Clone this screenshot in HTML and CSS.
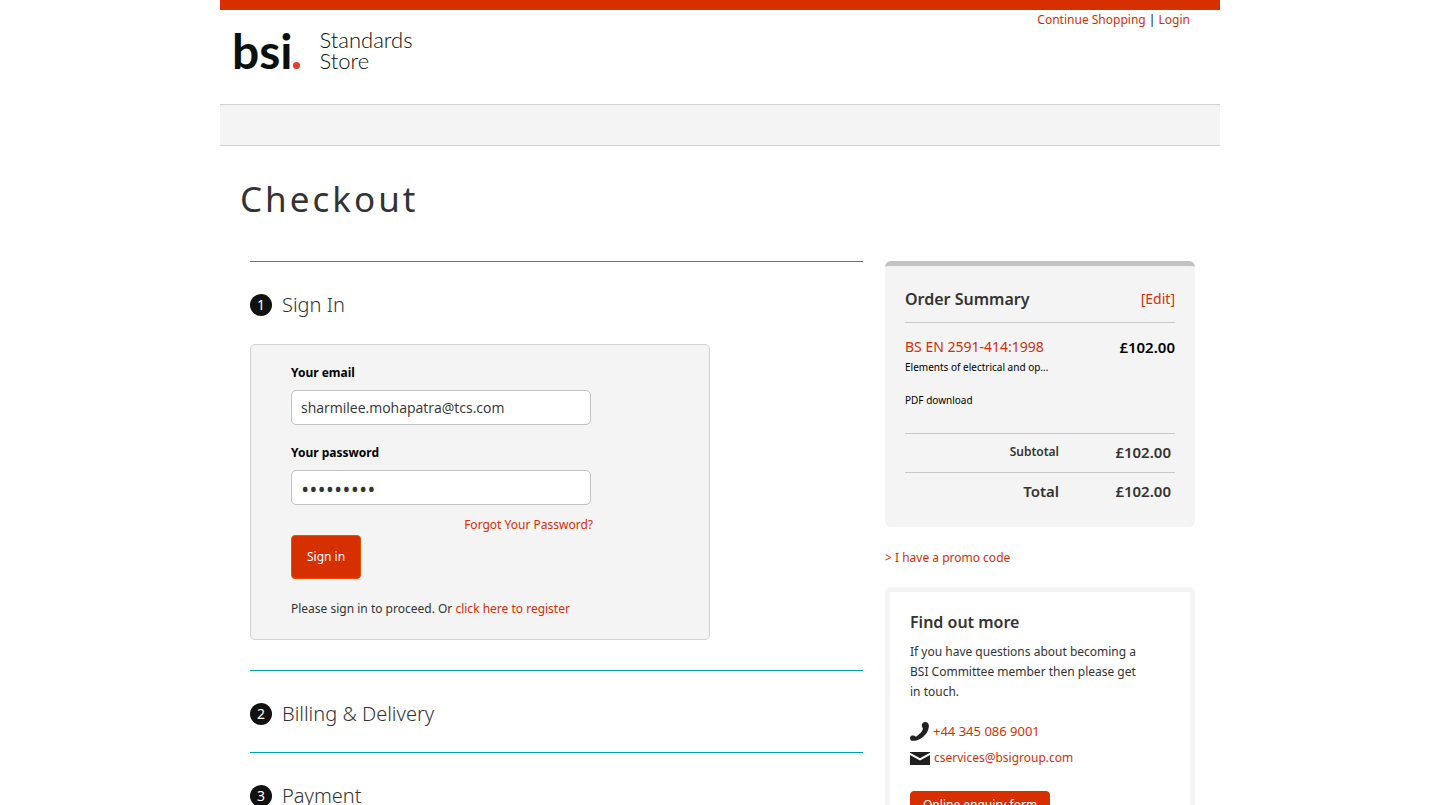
FILE: index.html
```html
<!DOCTYPE html>
<html lang="en">
<head>
<meta charset="utf-8">
<meta name="viewport" content="width=device-width, initial-scale=1">
<title>Checkout - BSI Standards Store</title>
<link rel="stylesheet" href="styles.css">
</head>
<body>
<div class="page">
  <header class="header">
    <a class="logo" href="#" aria-label="BSI Standards Store">
      <span class="logo-mark">bsi</span>
      <svg class="logo-dot" viewBox="0 0 7 7" aria-hidden="true"><circle cx="3.5" cy="3.5" r="3.5" fill="#e63b2b"/></svg>
      <span class="logo-name">Standards<br>Store</span>
    </a>
    <nav class="user-links"><a href="#">Continue Shopping</a> | <a href="#">Login</a></nav>
  </header>
  <div class="nav-bar"></div>
  <h1 class="title">Checkout</h1>
  <div class="columns">
    <main>
      <section class="step">
        <h2 class="step-title"><span class="step-number">1</span>Sign In</h2>
        <form class="sign-in">
          <label class="label" for="email">Your email</label>
          <input class="field" id="email" type="email" value="sharmilee.mohapatra@tcs.com">
          <label class="label" for="password">Your password</label>
          <input class="field field-password" id="password" type="password" value="password1">
          <a class="forgot" href="#">Forgot Your Password?</a>
          <button class="button submit" type="button">Sign in</button>
          <p class="register">Please sign in to proceed. Or <a href="#">click here to register</a></p>
        </form>
      </section>
      <section class="step">
        <h2 class="step-title"><span class="step-number">2</span>Billing &amp; Delivery</h2>
      </section>
      <section class="step">
        <h2 class="step-title"><span class="step-number">3</span>Payment</h2>
      </section>
    </main>
    <aside>
      <section class="summary">
        <div class="summary-head">
          <h3 class="side-title">Order Summary</h3>
          <a class="edit" href="#">[Edit]</a>
        </div>
        <div class="item">
          <div>
            <a class="item-name" href="#">BS EN 2591-414:1998</a>
            <p class="item-note">Elements of electrical and op...</p>
            <p class="item-note item-format">PDF download</p>
          </div>
          <span class="item-price">£102.00</span>
        </div>
        <table class="totals">
          <tr><th class="small" scope="row">Subtotal</th><td>£102.00</td></tr>
          <tr><th scope="row">Total</th><td>£102.00</td></tr>
        </table>
      </section>
      <a class="promo" href="#">&gt; I have a promo code</a>
      <section class="contact">
        <h3 class="side-title">Find out more</h3>
        <p class="contact-text">If you have questions about becoming a BSI Committee member then please get in touch.</p>
        <div class="contact-row">
          <svg class="phone" viewBox="0 0 20 20" aria-hidden="true"><path fill="#202020" d="M13.200 1.200C14.500-.2 17-.3 18.500.9c1.200 1 1.500 2.600 1.300 4.300C19.200 10.500 15.500 15 10.500 17.800 7.500 19.400 4.300 20.200 1.900 19.700.2 19.300-.4 17.200.3 15.700c.8-1.600 2.700-1.900 4.300-1.200l1.600.9c3.500-1.700 6.300-4.700 7.500-8.200l-.7-1.400c-.8-1.600-.9-3.300.2-4.600z"/></svg>
          <a class="phone-number" href="#">+44 345 086 9001</a>
        </div>
        <div class="contact-row">
          <svg class="mail" viewBox="0 0 20 13" aria-hidden="true"><path fill="#202020" d="M0 0h20v.8L10 6.200 0 .8zM0 3l10 5.400L20 3V13H0z"/></svg>
          <a href="#">cservices@bsigroup.com</a>
        </div>
        <button class="button enquiry" type="button">Online enquiry form</button>
      </section>
    </aside>
  </div>
</div>
</body>
</html>
```

FILE: styles.css
```css
* {
  box-sizing: border-box;
}

body {
  margin: 0;
  background: #fff;
  color: #333;
  font: 12px/20px "Noto Sans", "Open Sans", sans-serif;
}

h1, h2, h3, p {
  margin: 0;
}

a {
  color: #d62f00;
  text-decoration: none;
}

.page {
  max-width: 1000px;
  margin: 0 auto;
  border-top: 10px solid #d62f00;
}

.header {
  display: flex;
  justify-content: space-between;
  height: 94px;
  padding: 0 30px 0 12px;
}

.logo {
  display: flex;
  align-items: baseline;
  padding-top: 14px;
  color: #0a100d;
}

.logo-mark {
  font: 700 48px/54px Lato, sans-serif;
}

.logo-dot {
  width: 7px;
  height: 7px;
}

.logo-name {
  align-self: flex-start;
  padding: 5px 0 0 20px;
  font: 300 22px/21px Lato, sans-serif;
}

.user-links {
  color: #000;
}

.nav-bar {
  height: 42px;
  border: solid #d0d0d0;
  border-width: 1px 0;
  background: #f4f4f4;
}

.title {
  padding: 27px 20px 37px;
  font-size: 35px;
  font-weight: 400;
  line-height: 51px;
  letter-spacing: 3px;
}

.columns {
  display: grid;
  grid-template-columns: minmax(0, 1fr) 310px;
  gap: 22px;
  padding: 0 25px 0 30px;
}

.step {
  padding: 31px 0 26px;
  border-top: 1px solid #00a0af;
}

.step-title {
  display: flex;
  align-items: center;
  gap: 10px;
  font: 300 20px/24px "Noto Sans", sans-serif;
}

.step-number {
  width: 22px;
  height: 22px;
  border-radius: 50%;
  background: #111;
  color: #fff;
  font-size: 14px;
  font-weight: 400;
  line-height: 22px;
  text-align: center;
}

.sign-in {
  display: flex;
  flex-direction: column;
  align-items: flex-start;
  max-width: 460px;
  margin: 27px 0 4px;
  padding: 18px 40px 20px;
  border: 1px solid #d0d0d0;
  border-radius: 5px;
  background: #f4f4f4;
}

.label {
  margin-bottom: 7px;
  color: #000;
  font-weight: 700;
}

.field {
  width: 300px;
  max-width: 100%;
  height: 35px;
  padding: 0 9px;
  border: 1px solid #c2c2c2;
  border-radius: 5px;
  background: #fff;
  color: #333;
  font: 14px "Open Sans", sans-serif;
}

.field-password {
  font-size: 22px;
}

.field + .label {
  margin-top: 18px;
}

.forgot {
  width: 302px;
  margin-top: 10px;
  text-align: right;
}

.button {
  border: 1px solid #e85100;
  border-radius: 4px;
  background: #d62f00;
  color: #fff;
  font: 12px/20px "Noto Sans", sans-serif;
}

.submit {
  height: 44px;
  padding: 0 15px;
}

.register {
  margin-top: 20px;
}

.summary {
  padding: 21px 20px 15px;
  border-top: 5px solid #c2c2c2;
  border-radius: 6px;
  background: #f4f4f4;
}

.summary-head,
.item {
  display: flex;
  justify-content: space-between;
}

.summary-head {
  padding-bottom: 11px;
  border-bottom: 1px solid #c8c8c8;
}

.side-title {
  font-size: 16px;
  font-weight: 600;
  line-height: 24px;
}

.edit,
.item-name {
  font-size: 14px;
  line-height: 24px;
}

.item {
  padding: 12px 0 25px;
  color: #000;
}

.item-name {
  display: block;
}

.item-note {
  font-size: 10px;
  line-height: 16px;
}

.item-format {
  margin-top: 17px;
}

.item-price {
  font-size: 15px;
  font-weight: 600;
  line-height: 24px;
}

.totals {
  width: 100%;
  border-collapse: collapse;
  font-size: 15px;
}

.totals th,
.totals td {
  height: 39px;
  padding: 0 0 2px;
  border-top: 1px solid #c8c8c8;
  font-weight: 600;
  text-align: right;
}

.totals th {
  width: 154px;
}

.totals .small {
  font-size: 12px;
}

.totals td {
  padding-right: 4px;
}

.promo {
  display: block;
  margin: 21px 0 19px;
}

.contact {
  padding: 18px 20px;
  border: 5px solid #f4f4f4;
  border-radius: 5px;
}

.contact-text {
  max-width: 232px;
  margin: 8px 0 16px;
}

.contact-row {
  display: flex;
  align-items: center;
  gap: 4px;
  height: 27px;
}

.phone {
  width: 19px;
  height: 19px;
}

.phone-number {
  font-size: 13px;
}

.mail {
  width: 20px;
  height: 13px;
}

.enquiry {
  height: 28px;
  margin-top: 19px;
  padding: 0 12px;
  border-color: #d62f00;
}
```
